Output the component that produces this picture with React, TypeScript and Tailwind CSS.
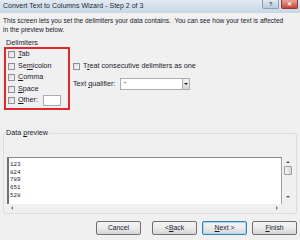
import React from "react";

const U = ({ c }: { c: string }) => <span className="underline underline-offset-[1px]">{c}</span>;

const Check = () => (
  <div className="w-[7px] h-[7px] border border-[#8e8f8f] bg-gradient-to-br from-[#dcdcdc] to-[#f8f8f8] shrink-0" />
);

const Btn = ({ children, focus }: { children: React.ReactNode; focus?: boolean }) => (
  <div
    className={`w-[45px] h-[14px] rounded-[2px] border flex items-center justify-center text-[6.8px] bg-gradient-to-b from-[#f3f3f3] via-[#ebebeb] to-[#d5d5d5] ${
      focus ? "border-[#3c7fb1] shadow-[inset_0_0_0_1px_#a8d8f0]" : "border-[#707070]"
    }`}
  >
    {children}
  </div>
);

export default function App() {
  return (
    <div
      className="w-[300px] h-[240px] bg-[#f0f0f0] text-[#1a1a2e] overflow-hidden flex flex-col"
      style={{ fontFamily: '"Liberation Sans", Arial, sans-serif' }}
    >
      {/* Title bar */}
      <div className="h-[13px] shrink-0 bg-gradient-to-b from-[#e2eaf3] to-[#c9d6e5] flex items-start justify-between pl-[3px] pr-[2px]">
        <div className="text-[7px] leading-[11px] text-[#1e2a3a]">Convert Text to Columns Wizard - Step 2 of 3</div>
        <div className="flex gap-[2px]">
          <div className="w-[17px] h-[9px] rounded-b-[2px] border border-t-0 border-[#8aa0b8] bg-gradient-to-b from-[#e0e9f2] to-[#b9cadb] flex items-center justify-center text-[6px] leading-none text-[#35506e] font-bold">
            ?
          </div>
          <div className="w-[17px] h-[9px] rounded-b-[2px] border border-t-0 border-[#8a3a30] bg-gradient-to-b from-[#e8a595] to-[#c7433a] flex items-center justify-center text-[6px] leading-none text-white font-bold">
            ✕
          </div>
        </div>
      </div>

      {/* Description */}
      <div className="pl-[3px] pt-[3px] text-[6.6px] leading-[9px]">
        <div>This screen lets you set the delimiters your data contains.&nbsp; You can see how your text is affected</div>
        <div>in the preview below.</div>
      </div>

      {/* Delimiters row */}
      <div className="flex pl-[4px] mt-[5px]">
        <div className="w-[66px] flex flex-col">
          <div className="text-[7.2px] leading-[7px] pl-[2px]">Delimiters</div>
          <div className="mt-[1px] h-[63px] border-2 border-[#e3262c] flex flex-col pl-[2px]">
            {[
              [<U c="T" key="t" />, "ab"],
              ["Se", <U c="m" key="m" />, "icolon"],
              [<U c="C" key="c" />, "omma"],
              [<U c="S" key="s" />, "pace"],
            ].map((parts, i) => (
              <div key={i} className="h-[11.5px] flex items-center gap-[3px] text-[7.2px]">
                <Check />
                <span>{parts}</span>
              </div>
            ))}
            <div className="h-[11.5px] flex items-center gap-[3px] text-[7.2px]">
              <Check />
              <span>
                <U c="O" />
                ther:
              </span>
              <div className="ml-[2px] w-[18px] h-[11px] bg-white border border-[#abadb3]" />
            </div>
          </div>
        </div>
        <div className="flex flex-col pl-[3px] pt-[23px]">
          <div className="flex items-center gap-[3px] text-[7.2px] h-[8px]">
            <Check />
            <span>
              T<U c="r" />
              eat consecutive delimiters as one
            </span>
          </div>
          <div className="flex items-center mt-[8px] text-[7.2px]">
            <span className="w-[47px]">
              Text <U c="q" />
              ualifier:
            </span>
            <div className="w-[70px] h-[12px] bg-white border border-[#abadb3] flex items-center justify-between pl-[3px]">
              <span className="text-[6px] leading-none">"</span>
              <div className="w-[7px] h-full border-l border-[#abadb3] bg-gradient-to-b from-[#f2f2f2] to-[#d8d8d8] flex items-center justify-center">
                <div className="w-0 h-0 border-l-[2px] border-r-[2px] border-t-[2px] border-l-transparent border-r-transparent border-t-[#222]" />
              </div>
            </div>
          </div>
        </div>
      </div>

      {/* Data preview */}
      <div className="mt-[23px] mx-[3px] relative">
        <div className="absolute left-[2px] -top-[4px] bg-[#f0f0f0] px-[1px] text-[7.2px] leading-[8px]">
          Data <U c="p" />
          review
        </div>
        <div className="h-[81px] border border-[#d5dfe5] rounded-[2px] pt-[23px] pl-[3px] pr-[3px] flex flex-col">
          <div className="flex">
            <div className="w-[275px] h-[47px] bg-white border-t border-[#828790] border-l-2 border-l-[#707070] border-r border-r-[#a0a0a0] pl-[1px] pt-[3px] text-[5.8px] leading-[7.7px]" style={{ fontFamily: '"Liberation Mono", monospace' }}>
              <div>123</div>
              <div>824</div>
              <div>789</div>
              <div>651</div>
              <div>528</div>
            </div>
            <div className="w-[11px] h-[45px] flex flex-col items-center pt-[4px]">
              <div className="w-0 h-0 border-l-[2px] border-r-[2px] border-b-[2px] border-l-transparent border-r-transparent border-b-[#555]" />
              <div className="mt-[3px] w-[8px] h-[9px] border border-[#9a9a9a] rounded-[1px] bg-gradient-to-r from-[#f4f4f4] to-[#d8d8d8]" />
              <div className="flex-1" />
              <div className="mb-[4px] w-0 h-0 border-l-[2px] border-r-[2px] border-t-[2px] border-l-transparent border-r-transparent border-t-[#555]" />
            </div>
          </div>
          <div className="h-[8px] w-[275px] flex items-center justify-between px-[4px]">
            <div className="w-0 h-0 border-t-[2px] border-b-[2px] border-r-[2px] border-t-transparent border-b-transparent border-r-[#777]" />
            <div className="w-0 h-0 border-t-[2px] border-b-[2px] border-l-[2px] border-t-transparent border-b-transparent border-l-[#777]" />
          </div>
        </div>
      </div>

      {/* Buttons */}
      <div className="flex justify-end gap-[5px] pr-[3px] mt-[7px]">
        <Btn>Cancel</Btn>
        <div className="w-[1px]" />
        <Btn>
          &lt; <U c="B" />
          ack
        </Btn>
        <Btn focus>
          <U c="N" />
          ext &gt;
        </Btn>
        <Btn>
          <U c="F" />
          inish
        </Btn>
      </div>
    </div>
  );
}
